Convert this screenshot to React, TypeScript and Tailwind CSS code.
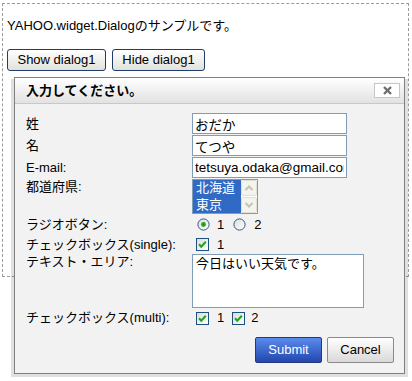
import React from 'react';

// Small form glyphs drawn to look like the XP-era native controls
const CheckBox = () => (
  <svg width="13" height="13" viewBox="0 0 13 13" className="shrink-0">
    <defs>
      <linearGradient id="cbg" x1="0" y1="0" x2="1" y2="1">
        <stop offset="0" stopColor="#dcdcd6" />
        <stop offset="1" stopColor="#ffffff" />
      </linearGradient>
    </defs>
    <rect x="0.5" y="0.5" width="12" height="12" fill="url(#cbg)" stroke="#1c5180" />
    <path d="M3 6.3 5.2 8.7 9.8 3.8" fill="none" stroke="#21a121" strokeWidth="2" />
  </svg>
);

const Radio: React.FC<{ checked?: boolean }> = ({ checked }) => (
  <svg width="13" height="13" viewBox="0 0 13 13" className="shrink-0">
    <defs>
      <linearGradient id="rbg" x1="0" y1="0" x2="1" y2="1">
        <stop offset="0" stopColor="#dcdcd6" />
        <stop offset="1" stopColor="#ffffff" />
      </linearGradient>
    </defs>
    <circle cx="6.5" cy="6.5" r="5.6" fill="url(#rbg)" stroke="#2f5a88" />
    {checked && <circle cx="6.5" cy="6.5" r="2.4" fill="#21a121" />}
  </svg>
);

const ScrollBtn: React.FC<{ up?: boolean }> = ({ up }) => (
  <div className="w-[16px] h-[16px] bg-[#f4f3ec] border border-[#e2e0d5] rounded-[2px] flex items-center justify-center">
    <svg width="10" height="8" viewBox="0 0 10 8">
      <path
        d={up ? 'M1.5 6 5 2.5 8.5 6' : 'M1.5 2 5 5.5 8.5 2'}
        fill="none"
        stroke="#c5c3b6"
        strokeWidth="2"
      />
    </svg>
  </div>
);

const Label: React.FC<{ children: React.ReactNode; lh?: string }> = ({ children, lh }) => (
  <div className={`w-[166px] shrink-0 ${lh ?? 'leading-[16px]'}`}>{children}</div>
);

export default function App() {
  return (
    <div className="relative w-[412px] h-[381px] overflow-hidden bg-white text-black text-[13px] leading-[16px] font-['Liberation_Sans','Noto_Sans_CJK_JP',sans-serif]">
      <div className="ml-[2px] mt-[3px] w-[407px] h-[274px] border border-dashed border-[#9a9a9a] pl-[4px] pt-[14px]">
        <p>YAHOO.widget.Dialogのサンプルです。</p>
        <div className="mt-[15px] flex gap-[6px]">
          <button className="h-[22px] w-[99px] rounded-[3px] border border-[#1e3c6c] bg-linear-to-b from-[#ffffff] to-[#e2e2dc]">
            Show dialog1
          </button>
          <button className="h-[22px] w-[93px] rounded-[3px] border border-[#1e3c6c] bg-linear-to-b from-[#ffffff] to-[#e2e2dc]">
            Hide dialog1
          </button>
        </div>
      </div>

      {/* dialog underlay shadow */}
      <div className="absolute left-[11px] top-[79px] w-[397px] h-[298px] bg-black/[0.12]" />

      {/* dialog */}
      <div className="absolute left-[14px] top-[77px] w-[391px] h-[297px] border border-[#808080] bg-[#f2f2f2] flex flex-col">
        <div className="relative h-[26px] shrink-0 border-b border-[#c8c8c8] bg-linear-to-b from-[#ffffff] to-[#e2e2e2] pl-[11px] flex items-center font-bold">
          入力してください。
          <div className="absolute right-[4px] top-[5px] w-[26px] h-[15px] bg-white border border-[#c6c6c6] flex items-center justify-center">
            <svg width="9" height="9" viewBox="0 0 9 9">
              <path d="M1 1 8 8 M8 1 1 8" stroke="#6e6e6e" strokeWidth="2.4" />
            </svg>
          </div>
        </div>

        <div className="flex-1 pl-[11px] pt-[9px] flex flex-col">
          <div className="h-[22px] flex">
            <Label lh="leading-[21px]">姓</Label>
            <input
              readOnly
              defaultValue="おだか"
              className="w-[155px] h-[21px] border border-[#7f9db9] bg-white px-[2px] outline-none text-[13.5px]"
            />
          </div>
          <div className="h-[22px] flex">
            <Label lh="leading-[21px]">名</Label>
            <input
              readOnly
              defaultValue="てつや"
              className="w-[155px] h-[21px] border border-[#7f9db9] bg-white px-[2px] outline-none text-[13.5px]"
            />
          </div>
          <div className="h-[22px] flex">
            <Label lh="leading-[21px]">E-mail:</Label>
            <input
              readOnly
              defaultValue="tetsuya.odaka@gmail.com"
              className="w-[155px] h-[21px] border border-[#7f9db9] bg-white px-[2px] outline-none text-[13.5px]"
            />
          </div>
          <div className="h-[35px] flex">
            <Label>都道府県:</Label>
            <div className="w-[66px] h-[35px] border border-[#7f9db9] bg-white flex">
              <div className="w-[48px] bg-[#316ac5] text-white leading-[16.5px] pl-[3px]">
                <div>北海道</div>
                <div>東京</div>
              </div>
              <div className="flex flex-col gap-[1px]">
                <ScrollBtn up />
                <ScrollBtn />
              </div>
            </div>
          </div>
          <div className="h-[21px] flex items-center">
            <Label>ラジオボタン:</Label>
            <div className="flex items-center pl-[5px]">
              <Radio checked />
              <span className="ml-[7px]">1</span>
              <span className="ml-[9px]">
                <Radio />
              </span>
              <span className="ml-[8px]">2</span>
            </div>
          </div>
          <div className="h-[19px] flex items-center">
            <Label>チェックボックス(single):</Label>
            <div className="flex items-center pl-[4px]">
              <CheckBox />
              <span className="ml-[8px]">1</span>
            </div>
          </div>
          <div className="h-[54px] flex">
            <Label>テキスト・エリア:</Label>
            <textarea
              readOnly
              defaultValue="今日はいい天気です。"
              className="w-[172px] h-[54px] border border-[#7f9db9] bg-white pl-[3px] pt-[1px] resize-none outline-none leading-[16px]"
            />
          </div>
          <div className="h-[20px] flex items-center">
            <Label>チェックボックス(multi):</Label>
            <div className="flex items-center pl-[4px]">
              <CheckBox />
              <span className="ml-[8px]">1</span>
              <span className="ml-[8px]">
                <CheckBox />
              </span>
              <span className="ml-[6px]">2</span>
            </div>
          </div>
          <div className="mt-[9px] flex justify-end gap-[5px] pr-[10px]">
            <button className="w-[67px] h-[26px] rounded-[2px] border border-[#22397c] bg-linear-to-b from-[#5a8cec] to-[#2446ae] text-white">
              Submit
            </button>
            <button className="w-[67px] h-[26px] rounded-[2px] border border-[#8a8a8a] bg-linear-to-b from-[#ffffff] to-[#d9d9d9]">
              Cancel
            </button>
          </div>
        </div>
      </div>
    </div>
  );
}
